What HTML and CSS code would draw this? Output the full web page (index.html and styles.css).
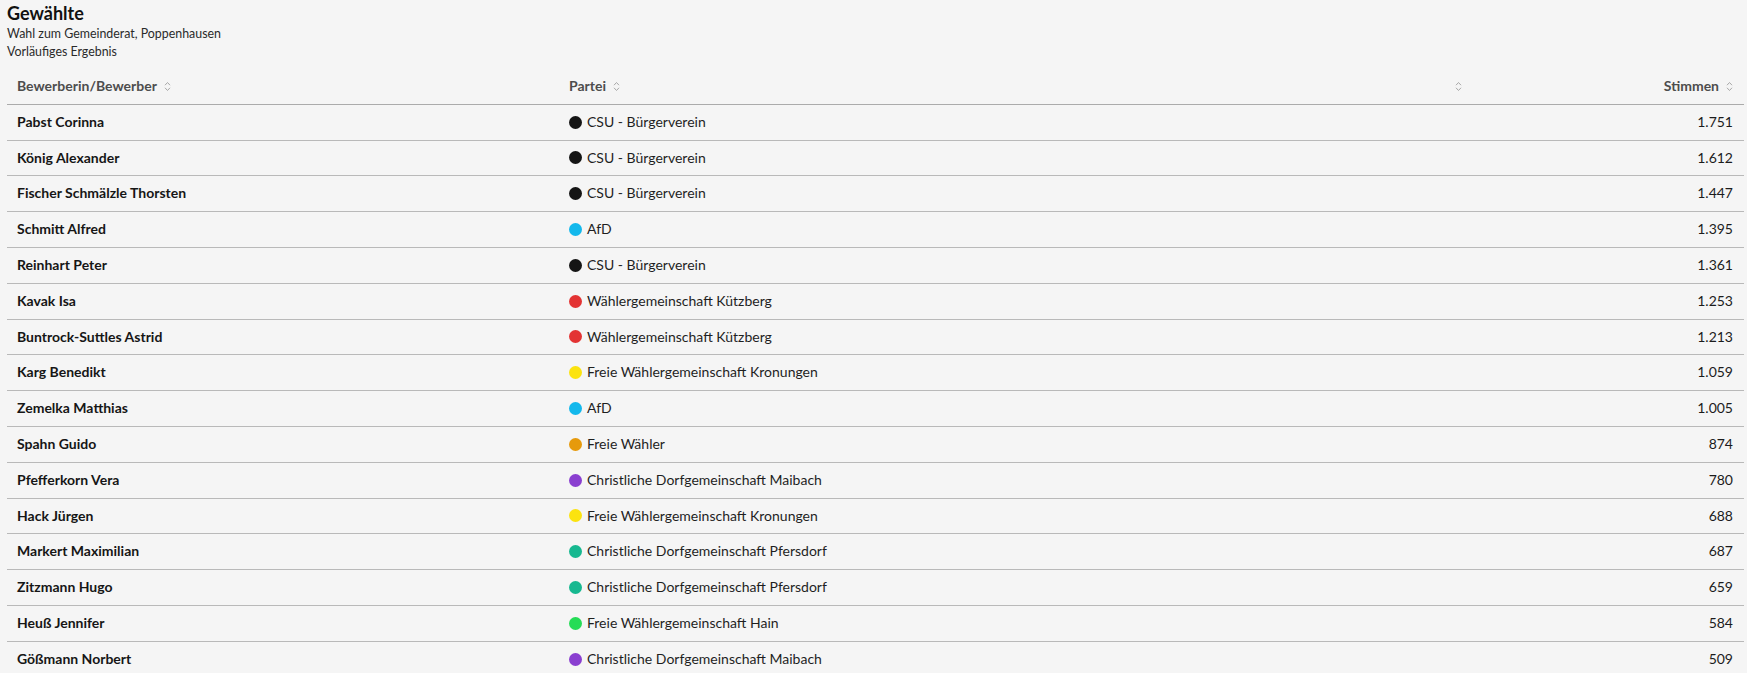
FILE: index.html
```html
<!DOCTYPE html>
<html lang="de">
<head>
<meta charset="utf-8">
<title>Gewählte</title>
<link rel="stylesheet" href="styles.css">
</head>
<body>
<div class="page">
  <header class="head">
    <h1 class="title">Gewählte</h1>
    <p class="subtitle">Wahl zum Gemeinderat, Poppenhausen</p>
    <p class="subtitle">Vorläufiges Ergebnis</p>
  </header>
  <table class="results">
    <colgroup>
      <col class="c-name"><col class="c-party"><col class="c-extra"><col class="c-votes">
    </colgroup>
    <thead>
      <tr>
        <th><span class="th-in">Bewerberin/Bewerber<svg class="sort" viewBox="0 0 7 11"><path d="M1 4.2L3.5 1.5L6 4.2M1 6.8L3.5 9.5L6 6.8"/></svg></span></th>
        <th><span class="th-in">Partei<svg class="sort" viewBox="0 0 7 11"><path d="M1 4.2L3.5 1.5L6 4.2M1 6.8L3.5 9.5L6 6.8"/></svg></span></th>
        <th><span class="th-in"><svg class="sort" viewBox="0 0 7 11"><path d="M1 4.2L3.5 1.5L6 4.2M1 6.8L3.5 9.5L6 6.8"/></svg></span></th>
        <th class="num"><span class="th-in">Stimmen<svg class="sort" viewBox="0 0 7 11"><path d="M1 4.2L3.5 1.5L6 4.2M1 6.8L3.5 9.5L6 6.8"/></svg></span></th>
      </tr>
    </thead>
    <tbody>
      <tr><td class="name">Pabst Corinna</td><td><span class="party"><i class="dot csu"></i>CSU - Bürgerverein</span></td><td></td><td class="num">1.751</td></tr>
      <tr><td class="name">König Alexander</td><td><span class="party"><i class="dot csu"></i>CSU - Bürgerverein</span></td><td></td><td class="num">1.612</td></tr>
      <tr><td class="name">Fischer Schmälzle Thorsten</td><td><span class="party"><i class="dot csu"></i>CSU - Bürgerverein</span></td><td></td><td class="num">1.447</td></tr>
      <tr><td class="name">Schmitt Alfred</td><td><span class="party"><i class="dot afd"></i>AfD</span></td><td></td><td class="num">1.395</td></tr>
      <tr><td class="name">Reinhart Peter</td><td><span class="party"><i class="dot csu"></i>CSU - Bürgerverein</span></td><td></td><td class="num">1.361</td></tr>
      <tr><td class="name">Kavak Isa</td><td><span class="party"><i class="dot wgk"></i>Wählergemeinschaft Kützberg</span></td><td></td><td class="num">1.253</td></tr>
      <tr><td class="name">Buntrock-Suttles Astrid</td><td><span class="party"><i class="dot wgk"></i>Wählergemeinschaft Kützberg</span></td><td></td><td class="num">1.213</td></tr>
      <tr><td class="name">Karg Benedikt</td><td><span class="party"><i class="dot fwk"></i>Freie Wählergemeinschaft Kronungen</span></td><td></td><td class="num">1.059</td></tr>
      <tr><td class="name">Zemelka Matthias</td><td><span class="party"><i class="dot afd"></i>AfD</span></td><td></td><td class="num">1.005</td></tr>
      <tr><td class="name">Spahn Guido</td><td><span class="party"><i class="dot fw"></i>Freie Wähler</span></td><td></td><td class="num">874</td></tr>
      <tr><td class="name">Pfefferkorn Vera</td><td><span class="party"><i class="dot cdm"></i>Christliche Dorfgemeinschaft Maibach</span></td><td></td><td class="num">780</td></tr>
      <tr><td class="name">Hack Jürgen</td><td><span class="party"><i class="dot fwk"></i>Freie Wählergemeinschaft Kronungen</span></td><td></td><td class="num">688</td></tr>
      <tr><td class="name">Markert Maximilian</td><td><span class="party"><i class="dot cdp"></i>Christliche Dorfgemeinschaft Pfersdorf</span></td><td></td><td class="num">687</td></tr>
      <tr><td class="name">Zitzmann Hugo</td><td><span class="party"><i class="dot cdp"></i>Christliche Dorfgemeinschaft Pfersdorf</span></td><td></td><td class="num">659</td></tr>
      <tr><td class="name">Heuß Jennifer</td><td><span class="party"><i class="dot fwh"></i>Freie Wählergemeinschaft Hain</span></td><td></td><td class="num">584</td></tr>
      <tr><td class="name">Gößmann Norbert</td><td><span class="party"><i class="dot cdm"></i>Christliche Dorfgemeinschaft Maibach</span></td><td></td><td class="num">509</td></tr>
    </tbody>
  </table>
</div>
</body>
</html>
```

FILE: styles.css
```css
html, body {
  margin: 0;
  padding: 0;
  background: #f5f5f5;
}
body {
  font-family: Lato, "Open Sans", "DejaVu Sans", sans-serif;
  color: #1c1c1c;
}
.page {
  padding: 1px 3px 0 7px;
}
.title {
  margin: 0;
  font-size: 18px;
  line-height: 24px;
  font-weight: 700;
  color: #111;
}
.subtitle {
  margin: 0;
  font-size: 12.4px;
  line-height: 18px;
  color: #2a2a2a;
}
.results {
  width: 100%;
  margin-top: 8px;
  border-collapse: collapse;
  table-layout: fixed;
}
.c-name { width: 552px; }
.c-party { width: 886px; }
.c-extra { width: 150px; }
.c-votes { width: auto; }
.results th,
.results td {
  padding: 7px 10px;
  height: 20.8px;
  font-size: 14px;
  line-height: 20.8px;
  text-align: left;
  vertical-align: middle;
  border-bottom: 1px solid #b9b9b9;
  white-space: nowrap;
  box-sizing: content-box;
}
.results th {
  font-weight: 700;
  color: #4d4d4d;
  border-bottom-color: #ababab;
}
.results .num {
  text-align: right;
  padding-right: 11px;
}
.th-in {
  display: inline-flex;
  align-items: center;
  gap: 7px;
  vertical-align: top;
  height: 20.8px;
}
.sort {
  width: 7px;
  height: 11px;
  fill: none;
  stroke: #a8a8a8;
  stroke-width: 1;
}
.name {
  font-weight: 700;
  color: #161616;
}
.party {
  display: inline-flex;
  align-items: center;
  gap: 5px;
  vertical-align: top;
  height: 20.8px;
  color: #1f1f1f;
}
.dot {
  width: 13px;
  height: 13px;
  border-radius: 50%;
  flex: none;
}
.csu { background: #151515; }
.afd { background: #13b8ec; }
.wgk { background: #e33333; }
.fwk { background: #fbe30f; }
.fw  { background: #e69a0c; }
.cdm { background: #8a3fd0; }
.cdp { background: #17b890; }
.fwh { background: #25dc56; }
```
